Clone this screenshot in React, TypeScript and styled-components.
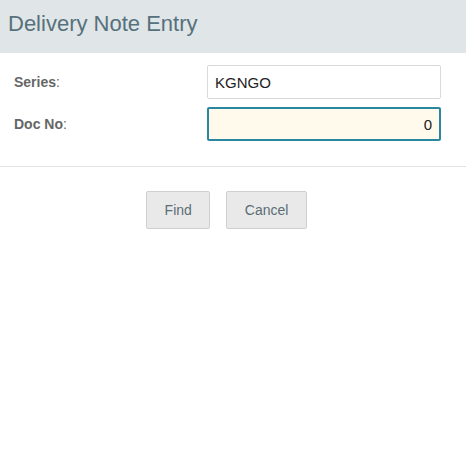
import React from "react";
import styled, { createGlobalStyle } from "styled-components";

const GlobalStyle = createGlobalStyle`
  html, body {
    margin: 0;
    padding: 0;
    background: #fff;
    font-family: "Liberation Sans", Arial, sans-serif;
  }
`;

const App = () => {
  return (
    <>
      <GlobalStyle />
      <Dialog>
        <Header>
          <Title>Delivery Note Entry</Title>
        </Header>

        <Form>
          <Row>
            <Label>
              <b>Series</b>:
            </Label>
            <Input type="text" defaultValue="KGNGO" />
          </Row>
          <Row>
            <Label>
              <b>Doc No</b>:
            </Label>
            <Input type="text" defaultValue="0" $active />
          </Row>
        </Form>

        <Divider />

        <Actions>
          <Button type="button">Find</Button>
          <Button type="button">Cancel</Button>
        </Actions>
      </Dialog>
    </>
  );
};

export default App;

const Dialog = styled.div`
  width: 466px;
  height: 476px;
  display: flex;
  flex-direction: column;
  background: #fff;
`;

const Header = styled.div`
  height: 53px;
  background-color: #e0e5e8;
  display: flex;
  align-items: center;
  padding-left: 8px;
  box-sizing: border-box;
`;

const Title = styled.h1`
  margin: 0 0 6px;
  font-size: 22px;
  font-weight: normal;
  color: #56717b;
`;

const Form = styled.div`
  display: flex;
  flex-direction: column;
  gap: 8px;
  padding: 12px 25px 0 13px;
`;

const Row = styled.div`
  display: grid;
  grid-template-columns: 194px 1fr;
  align-items: center;
`;

const Label = styled.label`
  font-size: 14px;
  color: #666;
  padding-left: 1px;

  b {
    font-weight: bold;
  }
`;

const Input = styled.input<{ $active?: boolean }>`
  box-sizing: border-box;
  width: 234px;
  height: 34px;
  font-family: "Liberation Sans", Arial, sans-serif;
  font-size: 15px;
  color: #222;
  border-radius: 2px;
  outline: none;
  padding: 0 7px;
  border: ${(p) => (p.$active ? "2px solid #2a87a0" : "1px solid #d9d9d9")};
  background-color: ${(p) => (p.$active ? "#fffaec" : "#fff")};
  text-align: ${(p) => (p.$active ? "right" : "left")};
`;

const Divider = styled.hr`
  margin: 25px 0 0;
  border: none;
  border-top: 1px solid #e2e2e2;
  width: 466px;
`;

const Actions = styled.div`
  display: flex;
  justify-content: center;
  gap: 16px;
  padding: 24px 13px 0 0;
`;

const Button = styled.button`
  height: 38px;
  padding: 0 17.5px;
  font-family: "Liberation Sans", Arial, sans-serif;
  font-size: 14px;
  color: #5a6e76;
  background-color: #e9e9e9;
  border: 1px solid #cfcfcf;
  border-radius: 2px;
`;
